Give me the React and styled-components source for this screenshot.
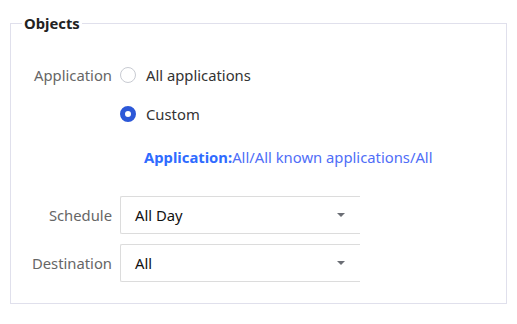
import React from "react";
import styled, { createGlobalStyle } from "styled-components";

const GlobalStyle = createGlobalStyle`
  * {
    margin: 0;
    padding: 0;
    box-sizing: border-box;
  }
  body {
    background: #fff;
    font-family: "Noto Sans", "Liberation Sans", Arial, sans-serif;
    font-size: 14.8px;
    color: #333;
  }
`;

const Page = styled.div`
  padding: 14px 10px 0 10px;
  width: 517px;
`;

const Fieldset = styled.fieldset`
  border: 1px solid #e0e0ec;
  padding: 27px 0 21px 0;
  margin: 0;
  min-width: 0;
`;

const Legend = styled.legend`
  margin-left: 11px;
  padding: 0 2px;
  font-weight: 700;
  font-size: 14.8px;
  line-height: 18px;
  color: #222;
`;

const Row = styled.div`
  display: flex;
  align-items: center;
  margin-top: ${(p) => p.$top || 0}px;
`;

const Label = styled.div`
  width: 101px;
  margin-right: 8px;
  text-align: right;
  color: #666;
  flex-shrink: 0;
  white-space: nowrap;
`;

const Radio = styled.label`
  display: flex;
  align-items: center;
  height: 32px;
  gap: 10px;
  color: #333;
  cursor: pointer;
`;

const Circle = styled.span`
  width: 16px;
  height: 16px;
  border-radius: 50%;
  background: #fff;
  border: ${(p) => (p.$checked ? "5px solid #2c58d8" : "1px solid #c8cbd2")};
`;

const Summary = styled.div`
  height: 20px;
  line-height: 20px;
  padding-left: 24px;
  color: #4f6ef7;
  white-space: nowrap;
`;

const Strong = styled.b`
  color: #2f6bff;
  font-weight: 700;
`;

const Select = styled.div`
  width: 240px;
  height: 38px;
  display: flex;
  align-items: center;
  justify-content: space-between;
  padding: 0 15px 0 14px;
  border: 1px solid #dcdcdc;
  border-right: none;
  border-radius: 2px 0 0 2px;
  color: #111;
`;

const Caret = styled.span`
  width: 0;
  height: 0;
  border-left: 4px solid transparent;
  border-right: 4px solid transparent;
  border-top: 4px solid #6b6e75;
`;

const Indent = styled.div`
  margin-left: 109px;
`;

export default function App() {
  return (
    <Page>
      <GlobalStyle />
      <Fieldset>
        <Legend>Objects</Legend>
        <Row>
          <Label>Application</Label>
          <Radio>
            <Circle />
            All applications
          </Radio>
        </Row>
        <Row $top={7}>
          <Indent>
            <Radio>
              <Circle $checked />
              Custom
            </Radio>
          </Indent>
        </Row>
        <Row $top={17}>
          <Indent>
            <Summary>
              <Strong>Application:</Strong>All/All known applications/All
            </Summary>
          </Indent>
        </Row>
        <Row $top={29}>
          <Label>Schedule</Label>
          <Select>
            All Day
            <Caret />
          </Select>
        </Row>
        <Row $top={10}>
          <Label>Destination</Label>
          <Select>
            All
            <Caret />
          </Select>
        </Row>
      </Fieldset>
    </Page>
  );
}
